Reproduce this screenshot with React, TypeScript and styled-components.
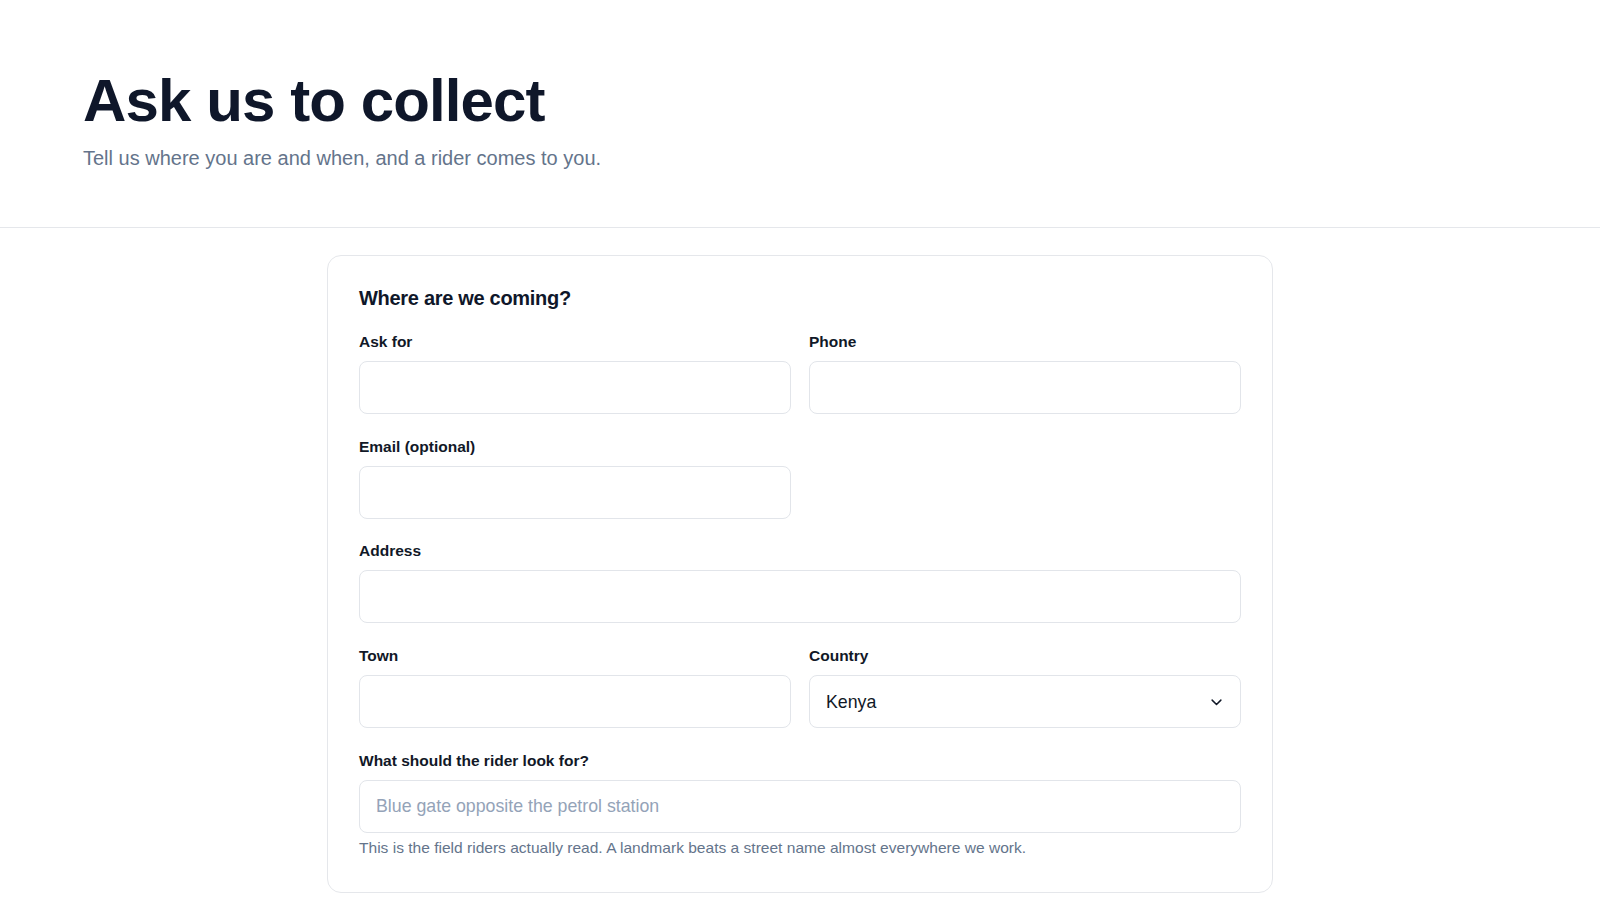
import React from 'react'
import styled, { createGlobalStyle } from 'styled-components'

const GlobalStyle = createGlobalStyle`
  * {
    box-sizing: border-box;
  }

  body {
    margin: 0;
    background: #ffffff;
    font-family: 'Liberation Sans', Arial, sans-serif;
    color: #0f172a;
  }
`

const countries = ['Kenya', 'Uganda', 'Tanzania', 'Rwanda', 'Ethiopia']

const App = () => {
  return (
    <>
      <GlobalStyle />
      <Header>
        <Title>Ask us to collect</Title>
        <Subtitle>Tell us where you are and when, and a rider comes to you.</Subtitle>
      </Header>

      <Main>
        <Card>
          <CardTitle>Where are we coming?</CardTitle>
          <FieldGrid>
            <Field>
              <Label htmlFor="ask-for">Ask for</Label>
              <Input id="ask-for" type="text" />
            </Field>
            <Field>
              <Label htmlFor="phone">Phone</Label>
              <Input id="phone" type="tel" />
            </Field>
            <Field $start>
              <Label htmlFor="email">Email (optional)</Label>
              <Input id="email" type="email" />
            </Field>
            <Field $wide>
              <Label htmlFor="address">Address</Label>
              <Input id="address" type="text" />
            </Field>
            <Field>
              <Label htmlFor="town">Town</Label>
              <Input id="town" type="text" />
            </Field>
            <Field>
              <Label htmlFor="country">Country</Label>
              <SelectWrap>
                <Select id="country" defaultValue="Kenya">
                  {countries.map((c) => (
                    <option key={c} value={c}>
                      {c}
                    </option>
                  ))}
                </Select>
                <Chevron width="15" height="15" viewBox="0 0 24 24" fill="none">
                  <path
                    d="M5 9l7 7 7-7"
                    stroke="#111827"
                    strokeWidth="2.4"
                    strokeLinecap="round"
                    strokeLinejoin="round"
                  />
                </Chevron>
              </SelectWrap>
            </Field>
            <Field $wide>
              <Label htmlFor="landmark">What should the rider look for?</Label>
              <Input id="landmark" type="text" placeholder="Blue gate opposite the petrol station" />
              <Hint>This is the field riders actually read. A landmark beats a street name almost everywhere we work.</Hint>
            </Field>
          </FieldGrid>
        </Card>
      </Main>
    </>
  )
}

const Header = styled.header`
  padding: 68px 83px 55px;
  border-bottom: 1px solid #e5e7eb;
`

const Title = styled.h1`
  margin: 0;
  font-size: 60px;
  line-height: 66px;
  font-weight: 700;
  letter-spacing: -0.015em;
  color: #0f172a;
`

const Subtitle = styled.p`
  margin: 10px 0 0;
  font-size: 20px;
  line-height: 28px;
  color: #64748b;
`

const Main = styled.main`
  display: flex;
  justify-content: center;
  padding: 27px 0 40px;
`

const Card = styled.section`
  width: 946px;
  padding: 30px 31px 34px;
  border: 1px solid #e5e7eb;
  border-radius: 14px;
  background: #ffffff;
`

const CardTitle = styled.h2`
  margin: 0 0 22px;
  font-size: 20px;
  line-height: 24px;
  font-weight: 700;
  letter-spacing: -0.015em;
  color: #0f172a;
`

const FieldGrid = styled.div`
  display: grid;
  grid-template-columns: 1fr 1fr;
  column-gap: 18px;
  row-gap: 22.7px;
`

const Field = styled.div<{ $wide?: boolean; $start?: boolean }>`
  display: flex;
  flex-direction: column;
  grid-column: ${(p) => (p.$wide ? '1 / -1' : p.$start ? '1' : 'auto')};
`

const Label = styled.label`
  margin-bottom: 9px;
  font-size: 15.5px;
  line-height: 20px;
  font-weight: 700;
  color: #111827;
`

const Input = styled.input`
  width: 100%;
  height: 53px;
  padding: 0 16px;
  border: 1px solid #e2e5ea;
  border-radius: 8px;
  background: #ffffff;
  font-family: inherit;
  font-size: 17.75px;
  color: #111827;
  outline: none;

  &::placeholder {
    color: #94a3b8;
  }
`

const SelectWrap = styled.div`
  position: relative;
`

const Select = styled.select`
  width: 100%;
  height: 53px;
  padding: 0 44px 0 16px;
  border: 1px solid #e2e5ea;
  border-radius: 8px;
  background: #ffffff;
  font-family: inherit;
  font-size: 17.75px;
  color: #111827;
  appearance: none;
  outline: none;
`

const Chevron = styled.svg`
  position: absolute;
  top: 50%;
  right: 17px;
  transform: translateY(-50%);
  pointer-events: none;
`

const Hint = styled.p`
  margin: 5px 0 0;
  font-size: 15.55px;
  line-height: 20px;
  color: #64748b;
`

export default App
